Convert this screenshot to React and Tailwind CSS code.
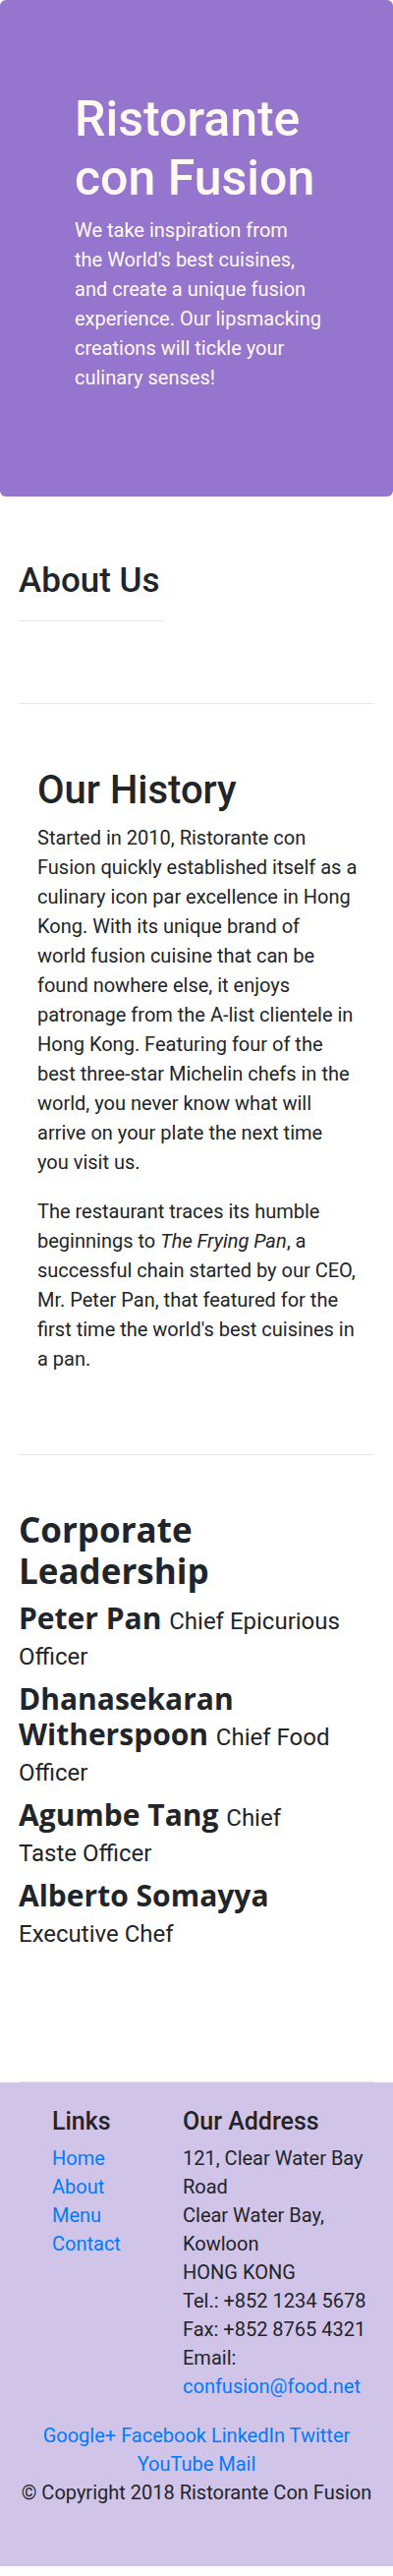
import React from 'react';

const leadLines = [
  'We take inspiration from',
  "the World's best cuisines,",
  'and create a unique fusion',
  'experience. Our lipsmacking',
  'creations will tickle your',
  'culinary senses!',
];

const historyLines = [
  'Started in 2010, Ristorante con',
  'Fusion quickly established itself as a',
  'culinary icon par excellence in Hong',
  'Kong. With its unique brand of',
  'world fusion cuisine that can be',
  'found nowhere else, it enjoys',
  'patronage from the A-list clientele in',
  'Hong Kong. Featuring four of the',
  'best three-star Michelin chefs in the',
  'world, you never know what will',
  'arrive on your plate the next time',
  'you visit us.',
];

const leaders = [
  { name: 'Peter Pan', title: 'Chief Epicurious Officer' },
  { name: 'Dhanasekaran Witherspoon', title: 'Chief Food Officer' },
  { name: 'Agumbe Tang', title: 'Chief Taste Officer' },
  { name: 'Alberto Somayya', title: 'Executive Chef' },
];

const links = ['Home', 'About', 'Menu', 'Contact'];
const social = ['Google+', 'Facebook', 'LinkedIn', 'Twitter', 'YouTube', 'Mail'];

function Lines({ lines }) {
  return lines.map((line, i) => (
    <React.Fragment key={i}>
      {line}
      {i < lines.length - 1 && <br />}
    </React.Fragment>
  ));
}

export default function App() {
  return (
    <div className="bg-white text-[#212529] font-['Roboto',sans-serif]">
      {/* Jumbotron */}
      <header className="bg-[#9575cd] rounded-md pt-[91px] pb-[106px] text-[#fffaf0]">
        <div className="ml-[76px] w-[270px]">
          <h1 className="text-[50px] leading-[60px] font-medium mb-[8px]">
            Ristorante<br />con Fusion
          </h1>
          <p className="text-[20px] leading-[30px]">
            <Lines lines={leadLines} />
          </p>
        </div>
      </header>

      <main className="px-[19px]">
        {/* About Us */}
        <div className="mt-[65px] w-[148px]">
          <h3 className="text-[35px] leading-[42px] font-medium whitespace-nowrap">About Us</h3>
          <hr className="mt-[19px] border-black/10" />
        </div>
        <hr className="mt-[83px] border-black/10" />

        {/* Our History */}
        <section className="mt-[64px] ml-[19px] w-[340px]">
          <h2 className="text-[40px] leading-[48px] font-medium mb-[9px]">Our History</h2>
          <p className="text-[20px] leading-[30px] mb-[20px]">
            <Lines lines={historyLines} />
          </p>
          <p className="text-[20px] leading-[30px]">
            The restaurant traces its humble<br />
            beginnings to <em>The Frying Pan</em>, a<br />
            successful chain started by our CEO,<br />
            Mr. Peter Pan, that featured for the<br />
            first time the world's best cuisines in<br />
            a pan.
          </p>
        </section>
        <hr className="mt-[82px] border-black/10" />

        {/* Corporate Leadership */}
        <section className="mt-[55px] w-[329px]">
          <h3 className="font-['Open_Sans',sans-serif] text-[35px] leading-[42px] font-bold mb-[9px]">
            Corporate<br />Leadership
          </h3>
          {leaders.map((l) => (
            <div key={l.name} className="mb-[10px] text-[30px] leading-[36px] font-['Open_Sans',sans-serif] font-bold">
              {l.name}{' '}
              <small className="text-[24px] leading-none font-normal font-['Roboto',sans-serif]">{l.title}</small>
            </div>
          ))}
        </section>
        <hr className="mt-[135px] border-black/10" />
      </main>

      {/* Footer */}
      <footer className="bg-[#d1c4e9] pt-[25px] pb-[60px]">
        <div className="flex">
          <div className="pl-[53px] w-[186px]">
            <h5 className="text-[25px] leading-[30px] font-medium mb-[8px]">Links</h5>
            <ul className="text-[20px] leading-[29px]">
              {links.map((l) => (
                <li key={l}>
                  <a href="#" className="text-[#007bff]">{l}</a>
                </li>
              ))}
            </ul>
          </div>
          <div className="flex-1 pr-[19px]">
            <h5 className="text-[25px] leading-[30px] font-medium mb-[8px]">Our Address</h5>
            <address className="not-italic text-[20px] leading-[29px]">
              121, Clear Water Bay Road<br />
              Clear Water Bay, Kowloon<br />
              HONG KONG<br />
              Tel.: +852 1234 5678<br />
              Fax: +852 8765 4321<br />
              Email: <a href="#" className="text-[#007bff]">confusion@food.net</a>
            </address>
          </div>
        </div>
        <div className="mt-[21px] px-[19px] text-center text-[20px] leading-[29px]">
          <div className="px-[20px]">
            {social.map((s, i) => (
              <React.Fragment key={s}>
                <a href="#" className="text-[#007bff]">{s}</a>
                {i < social.length - 1 ? ' ' : ''}
              </React.Fragment>
            ))}
          </div>
          <p>© Copyright 2018 Ristorante Con Fusion</p>
        </div>
      </footer>
    </div>
  );
}
